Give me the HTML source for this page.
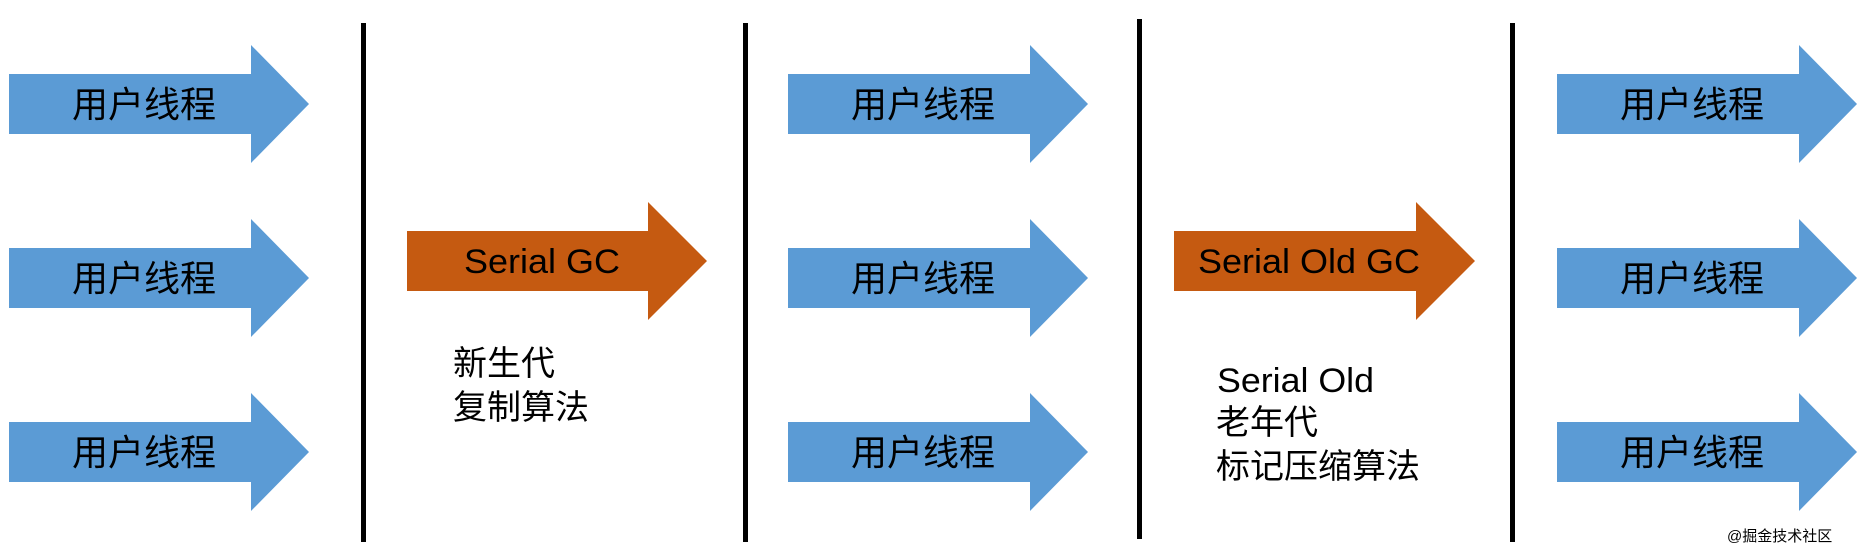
<!DOCTYPE html>
<html><head><meta charset="utf-8"><style>
html,body{margin:0;padding:0;background:#fff;width:1867px;height:548px;overflow:hidden}
svg text{font-family:"Liberation Sans","Noto Sans CJK SC",sans-serif;fill:#000}
</style></head><body>
<svg width="1867" height="548" viewBox="0 0 1867 548" xmlns="http://www.w3.org/2000/svg">
<defs>
<polygon id="ab" points="0,29 242,29 242,0 300,59 242,118 242,89 0,89"/>
</defs>
<g fill="#5b9bd5">
<use href="#ab" x="9" y="45"/>
<use href="#ab" x="9" y="219"/>
<use href="#ab" x="9" y="393"/>
<use href="#ab" x="788" y="45"/>
<use href="#ab" x="788" y="219"/>
<use href="#ab" x="788" y="393"/>
<use href="#ab" x="1557" y="45"/>
<use href="#ab" x="1557" y="219"/>
<use href="#ab" x="1557" y="393"/>
</g>
<g fill="#c55a11">
<polygon points="407,231 648,231 648,202 707,261 648,320 648,291 407,291"/>
<polygon points="1174,231 1416,231 1416,202 1475,261 1416,320 1416,291 1174,291"/>
</g>
<g fill="#000">
<rect x="361" y="23" width="5" height="519"/>
<rect x="743" y="23" width="5" height="519"/>
<rect x="1137" y="19" width="5" height="520"/>
<rect x="1510" y="23" width="5" height="519"/>
</g>
<g font-size="36">
<text x="72" y="117">用户线程</text>
<text x="72" y="291">用户线程</text>
<text x="72" y="465">用户线程</text>
<text x="851" y="117">用户线程</text>
<text x="851" y="291">用户线程</text>
<text x="851" y="465">用户线程</text>
<text x="1620" y="117">用户线程</text>
<text x="1620" y="291">用户线程</text>
<text x="1620" y="465">用户线程</text>
</g>
<g font-size="34">
<text x="464" y="273" textLength="156" lengthAdjust="spacingAndGlyphs">Serial GC</text>
<text x="1198" y="273" textLength="222" lengthAdjust="spacingAndGlyphs">Serial Old GC</text>
<text x="1217" y="392" textLength="157" lengthAdjust="spacingAndGlyphs">Serial Old</text>
</g>
<g font-size="34">
<text x="453" y="375">新生代</text>
<text x="453" y="419">复制算法</text>
<text x="1216" y="434">老年代</text>
<text x="1216" y="478">标记压缩算法</text>
</g>
<text x="1727" y="541" font-size="15" fill="#333">@掘金技术社区</text>
</svg>
</body></html>
